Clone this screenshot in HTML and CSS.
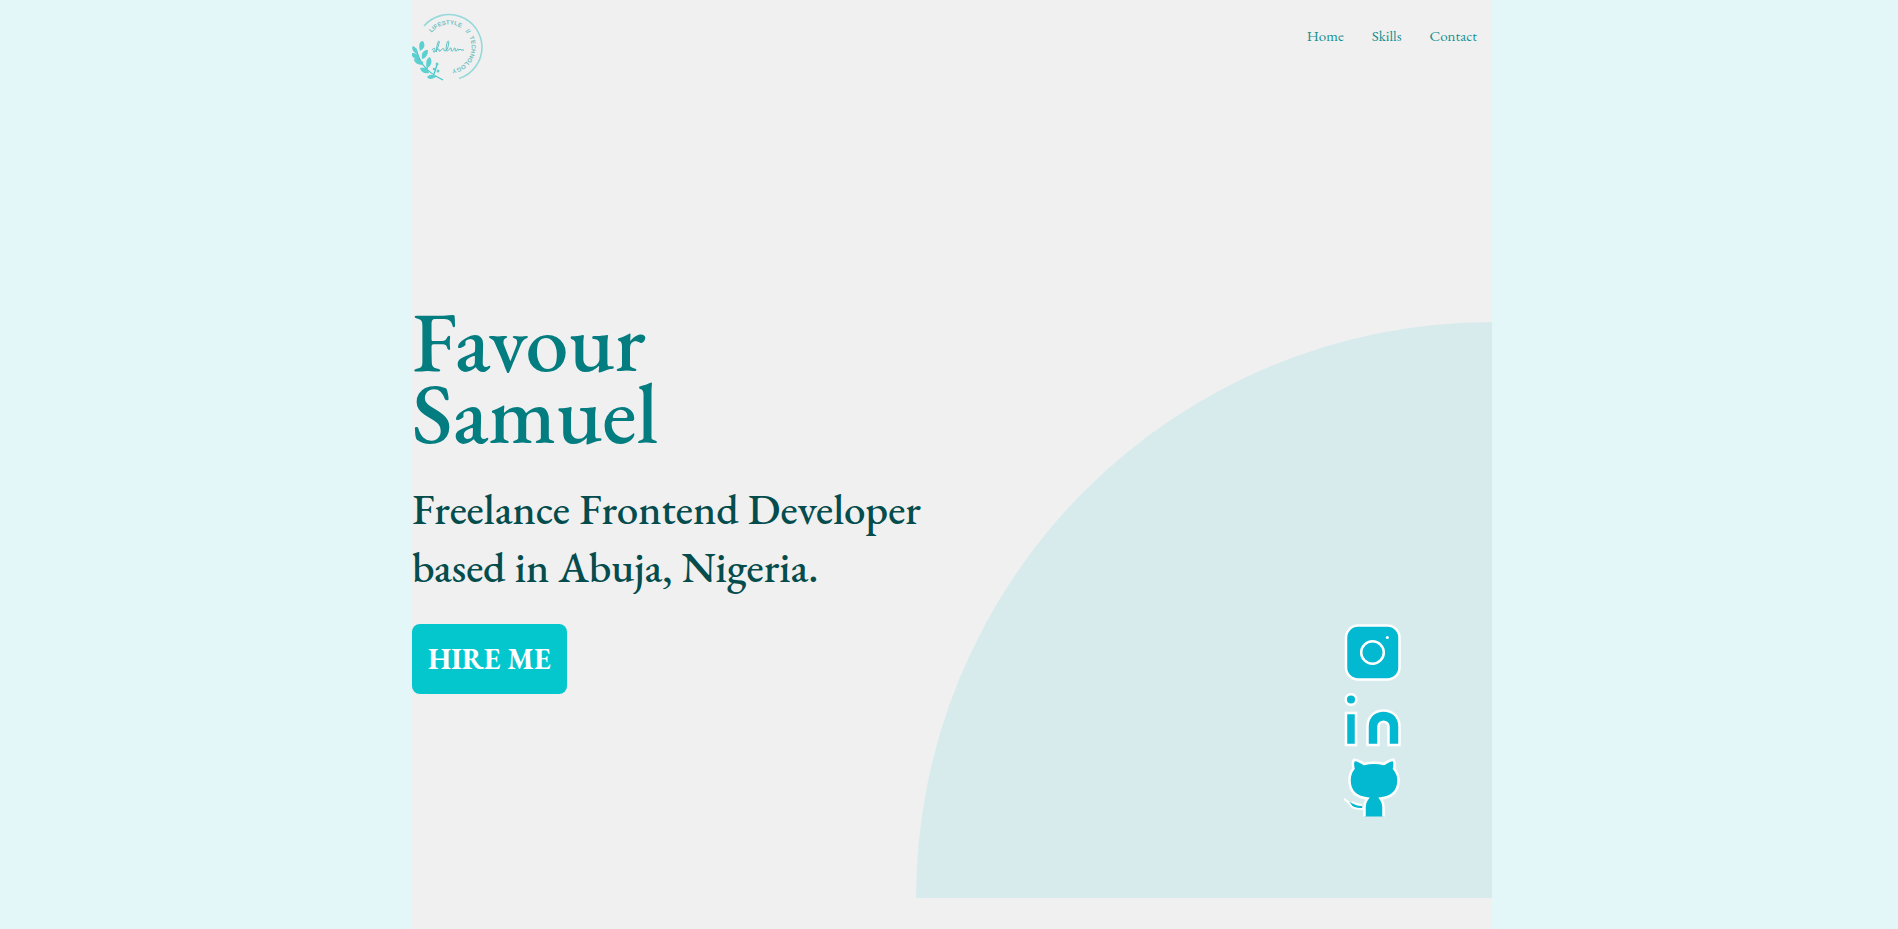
FILE: index.html
```html
<!DOCTYPE html>
<html lang="en">
<head>
<meta charset="utf-8">
<meta name="viewport" content="width=device-width, initial-scale=1">
<title>Favour Samuel</title>
<link rel="stylesheet" href="styles.css">
</head>
<body>
<div class="page">
  <header class="header">
    <a class="logo" href="#" aria-label="Home page">
      <svg width="76" height="84" viewBox="0 0 76 84" fill="none">
        <path d="M12 26A33 33 0 0 1 70 47A33 33 0 0 1 47 78.500" stroke="#97d9db" stroke-width="1.600"/>
        <defs><path id="ring" d="M19.500 32.800A22.500 22.500 0 0 1 59.500 47A22.500 22.500 0 0 1 37 69.500A22.500 22.500 0 0 1 28 67.600"/></defs>
        <text class="logo-ring"><textPath href="#ring" startOffset="0">LIFESTYLE</textPath></text>
        <text class="logo-ring"><textPath href="#ring" startOffset="38">//</textPath></text>
        <text class="logo-ring"><textPath href="#ring" startOffset="45">TECHNOLOGY</textPath></text>
        <path d="M20 50c1-2 3-2 3-1s-3 3-1 3c3 0 6-10 5-11s-3 9-3 11c1-3 3-4 3-2s1 2 2 0c2-2 3-2 3 0s3 1 4-3c1-5 1-6 0-6s-3 10-1 10 3-4 4-3-1 3 1 3 2-4 3-3-1 3 1 3 1-3 2-2 0 2 1 1l1-1 1 1h3" stroke="#57c0c2" stroke-width="1"/>
        <path d="M4 49c3 10 6 21 27 31M11 63l-5-4M15 69l1-8M22 74l3-9M17 71l-7-1M24 76l-6 2" stroke="#3dc4c6" stroke-width="1.200"/>
        <g fill="#5ccfd0">
          <path d="M5 54C-1 51 0 47 1 46c4 2 5 4 4 8ZM8 51c-2-7 0-10 3-10 3 5 1 8-3 10ZM7 60c-6-1-8-5-7-7 5 0 7 2 7 7ZM10 59c-1-7 2-9 6-9 0 5-2 8-6 9ZM11 65c-6 0-9-3-9-6 6 0 9 2 9 6ZM15 68c-2-6 0-10 3-11 3 5 1 9-3 11ZM17 73c-5 1-8-1-9-5 6-1 8 1 9 5ZM24 77c-5 3-8 2-9 0 3-3 6-3 9 0Z"/>
          <circle cx="25" cy="64" r="1.500"/><circle cx="26" cy="71" r="1.500"/><circle cx="22" cy="69" r="1.300"/>
        </g>
      </svg>
    </a>
    <nav class="nav">
      <a href="#home">Home</a>
      <a href="#skills">Skills</a>
      <a href="#contact">Contact</a>
    </nav>
  </header>
  <main class="hero" id="home">
    <div class="circle">
      <div class="socials">
        <a href="#instagram" aria-label="Instagram">
          <svg width="58" height="58" viewBox="0 0 58 58" fill="#03b8d1" stroke="#fff" stroke-width="2.500">
            <rect x="2" y="1.500" width="53.500" height="54" rx="12"/>
            <circle cx="28.500" cy="28.500" r="11.300"/>
            <circle cx="43.300" cy="13.500" r="1.500" fill="#fff" stroke="none"/>
          </svg>
        </a>
        <a href="#linkedin" aria-label="LinkedIn">
          <svg width="58" height="54" viewBox="0 0 58 54" fill="#03b8d1" stroke="#fff" stroke-width="2.500">
            <circle cx="7" cy="6.500" r="5.300"/>
            <path d="M2 20h10v32H2ZM23.500 52V33.500C23.500 12 55.500 12 55.500 33.500V52H44.500V33.500C44.500 27 34.500 27 34.500 33.500V52Z"/>
          </svg>
        </a>
        <a href="#github" aria-label="GitHub">
          <svg width="58" height="60" viewBox="0 0 58 60" fill="#03b8d1" stroke="#fff" stroke-width="2.500">
            <path stroke="none" d="M4 44C8 44 11 48 18 48V51C11 50 7 48 4 44Z"/>
            <path d="M0 41C4 43 5 45 8 49C11 51 15 51 21 51M8 44C11 46 14 47 18 47" fill="none" stroke-width="2"/>
            <path d="M20.500 58.500V49C20.500 44 22.500 42 23.500 40.500C14 39.500 5.500 35 5.500 22C5.500 16.500 7.500 13 9.500 10.500C8.500 7 9 3.500 10 1.800C14 2 17 4 20 6C26 4.500 34 4.500 40 6C43 4 46 2 49.500 1.800C50.500 4 51 7 50 10.500C52 13 54.500 16.500 54.500 22C54.500 35 46 39.500 36.500 40.500C37.500 42 39.500 44 39.500 49V58.500"/>
          </svg>
        </a>
      </div>
    </div>
    <div class="intro">
      <h1 class="name">Favour<br>Samuel</h1>
      <p class="role">Freelance Frontend Developer<br>based in Abuja, Nigeria.</p>
      <button class="hire" type="button">HIRE ME</button>
    </div>
  </main>
</div>
</body>
</html>
```
FILE: styles.css
```css
* {
  box-sizing: border-box;
}

body {
  margin: 0;
  padding-left: 6px;
  background: #e3f7f9;
  font-family: "EB Garamond", "Liberation Serif", serif;
}

a {
  color: inherit;
  text-decoration: none;
}

svg {
  display: block;
}

.page {
  display: flex;
  flex-direction: column;
  max-width: 1080px;
  min-height: 100vh;
  margin: 0 auto;
  padding-bottom: 31px;
  background: #f0f0f0;
}

.header {
  display: flex;
  justify-content: space-between;
  align-items: flex-start;
}

.logo-ring {
  fill: #6cc0c2;
  font-family: "Liberation Sans", sans-serif;
  font-size: 6px;
  font-weight: bold;
}

.nav {
  display: flex;
  gap: 28px;
  padding: 27px 15px 0 0;
  color: #159091;
  font-size: 15px;
  line-height: 18px;
}

.hero {
  display: grid;
  flex: 1;
}

.circle,
.intro {
  grid-area: 1 / 1;
}

.circle {
  display: flex;
  justify-content: flex-end;
  align-items: flex-end;
  place-self: end;
  width: min(576px, 100%);
  aspect-ratio: 1;
  padding: 0 90px 80px 0;
  border-radius: 100% 0 0 0;
  background: #d8ebec;
}

.socials {
  display: flex;
  flex-direction: column;
  gap: 11px;
}

.intro {
  align-self: end;
  justify-self: start;
  padding-bottom: 204px;
}

.name {
  margin: 0 0 31px;
  color: #047d80;
  font-size: 86px;
  font-weight: 500;
  line-height: 72px;
}

.role {
  margin: 0 0 28px;
  color: #054c4d;
  font-size: 43px;
  font-weight: 500;
  line-height: 58px;
}

.hire {
  display: block;
  padding: 20px 16px;
  border: 0;
  border-radius: 8px;
  background: #04c6cd;
  color: #fff;
  font-family: inherit;
  font-size: 29px;
  font-weight: bold;
  line-height: 30px;
}
```
